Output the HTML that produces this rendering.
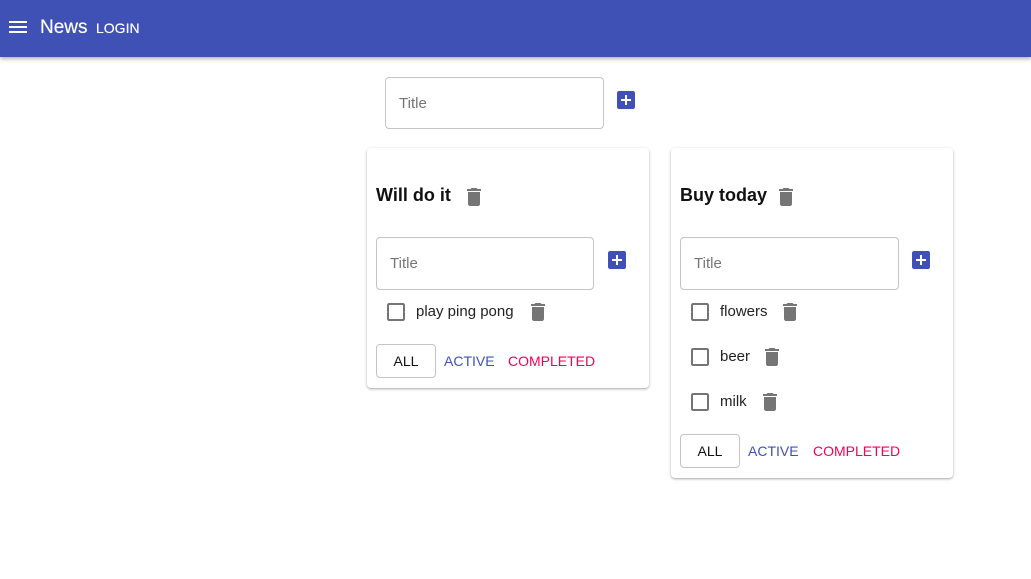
<!DOCTYPE html>
<html><head><meta charset="utf-8"><style>
body{margin:0;width:1031px;height:579px;background:#fff;position:relative;overflow:hidden;font-family:"Liberation Sans",sans-serif;}
.a{position:absolute;}
.bar{left:0;top:0;width:1031px;height:57px;background:#3f51b5;box-shadow:0 2px 4px rgba(0,0,0,.3);}
.inp{border:1px solid #c4c4c4;border-radius:4px;box-sizing:border-box;color:#757575;font-size:15px;padding-left:13px;display:flex;align-items:center;}
.card{background:#fff;border-radius:4px;box-shadow:0 1px 3px rgba(0,0,0,.25),0 1px 1px rgba(0,0,0,.12);}
.t{font-size:18px;font-weight:bold;color:#111;}
.it{font-size:15px;color:#222;}
.btn{font-size:14px;letter-spacing:0;}
.all{border:1px solid #c4c4c4;border-radius:4px;box-sizing:border-box;display:flex;align-items:center;justify-content:center;color:#111;}
</style></head><body>
<div class="a bar"></div>
<svg class="a" style="left:6px;top:15px" width="24" height="24" viewBox="0 0 24 24"><path fill="#fff" d="M3 18h18v-2H3v2zm0-5h18v-2H3v2zm0-7v2h18V6H3z"/></svg>
<div class="a" style="left:40px;top:17px;color:#fff;font-size:19px;font-weight:500;text-shadow:0 0 .4px #fff;">News</div>
<div class="a" style="left:96px;top:20px;color:#fff;font-size:14px;text-shadow:0 0 .4px #fff;">LOGIN</div>

<div class="a inp" style="left:385px;top:77px;width:219px;height:52px;">Title</div>
<svg class="a" style="left:614px;top:88px" width="24" height="24" viewBox="0 0 24 24"><path fill="#3f51b5" d="M19 3H5c-1.11 0-2 .9-2 2v14c0 1.1.89 2 2 2h14c1.1 0 2-.9 2-2V5c0-1.1-.9-2-2-2zm-2 10h-4v4h-2v-4H7v-2h4V7h2v4h4v2z"/></svg>

<div class="a card" style="left:367px;top:148px;width:282px;height:240px;"></div>
<div class="a t" style="left:376px;top:185px;">Will do it</div>
<svg class="a" style="left:462px;top:185px" width="24" height="24" viewBox="0 0 24 24"><path fill="#757575" d="M6 19c0 1.1.9 2 2 2h8c1.1 0 2-.9 2-2V7H6v12zM19 4h-3.5l-1-1h-5l-1 1H5v2h14V4z"/></svg>
<div class="a inp" style="left:376px;top:237px;width:218px;height:53px;">Title</div>
<svg class="a" style="left:605px;top:248px" width="24" height="24" viewBox="0 0 24 24"><path fill="#3f51b5" d="M19 3H5c-1.11 0-2 .9-2 2v14c0 1.1.89 2 2 2h14c1.1 0 2-.9 2-2V5c0-1.1-.9-2-2-2zm-2 10h-4v4h-2v-4H7v-2h4V7h2v4h4v2z"/></svg>
<svg class="a" style="left:384px;top:300px" width="24" height="24" viewBox="0 0 24 24"><path fill="#757575" d="M19 5v14H5V5h14m0-2H5c-1.1 0-2 .9-2 2v14c0 1.1.9 2 2 2h14c1.1 0 2-.9 2-2V5c0-1.1-.9-2-2-2z"/></svg>
<div class="a it" style="left:416px;top:303px;">play ping pong</div>
<svg class="a" style="left:526px;top:300px" width="24" height="24" viewBox="0 0 24 24"><path fill="#757575" d="M6 19c0 1.1.9 2 2 2h8c1.1 0 2-.9 2-2V7H6v12zM19 4h-3.5l-1-1h-5l-1 1H5v2h14V4z"/></svg>
<div class="a all btn" style="left:376px;top:344px;width:60px;height:34px;">ALL</div>
<div class="a btn" style="left:444px;top:353px;color:#3f51b5;">ACTIVE</div>
<div class="a btn" style="left:508px;top:353px;color:#f50057;">COMPLETED</div>

<div class="a card" style="left:671px;top:148px;width:282px;height:330px;"></div>
<div class="a t" style="left:680px;top:185px;">Buy today</div>
<svg class="a" style="left:774px;top:185px" width="24" height="24" viewBox="0 0 24 24"><path fill="#757575" d="M6 19c0 1.1.9 2 2 2h8c1.1 0 2-.9 2-2V7H6v12zM19 4h-3.5l-1-1h-5l-1 1H5v2h14V4z"/></svg>
<div class="a inp" style="left:680px;top:237px;width:219px;height:53px;">Title</div>
<svg class="a" style="left:909px;top:248px" width="24" height="24" viewBox="0 0 24 24"><path fill="#3f51b5" d="M19 3H5c-1.11 0-2 .9-2 2v14c0 1.1.89 2 2 2h14c1.1 0 2-.9 2-2V5c0-1.1-.9-2-2-2zm-2 10h-4v4h-2v-4H7v-2h4V7h2v4h4v2z"/></svg>

<svg class="a" style="left:688px;top:300px" width="24" height="24" viewBox="0 0 24 24"><path fill="#757575" d="M19 5v14H5V5h14m0-2H5c-1.1 0-2 .9-2 2v14c0 1.1.9 2 2 2h14c1.1 0 2-.9 2-2V5c0-1.1-.9-2-2-2z"/></svg>
<div class="a it" style="left:720px;top:303px;">flowers</div>
<svg class="a" style="left:778px;top:300px" width="24" height="24" viewBox="0 0 24 24"><path fill="#757575" d="M6 19c0 1.1.9 2 2 2h8c1.1 0 2-.9 2-2V7H6v12zM19 4h-3.5l-1-1h-5l-1 1H5v2h14V4z"/></svg>

<svg class="a" style="left:688px;top:345px" width="24" height="24" viewBox="0 0 24 24"><path fill="#757575" d="M19 5v14H5V5h14m0-2H5c-1.1 0-2 .9-2 2v14c0 1.1.9 2 2 2h14c1.1 0 2-.9 2-2V5c0-1.1-.9-2-2-2z"/></svg>
<div class="a it" style="left:720px;top:348px;">beer</div>
<svg class="a" style="left:760px;top:345px" width="24" height="24" viewBox="0 0 24 24"><path fill="#757575" d="M6 19c0 1.1.9 2 2 2h8c1.1 0 2-.9 2-2V7H6v12zM19 4h-3.5l-1-1h-5l-1 1H5v2h14V4z"/></svg>

<svg class="a" style="left:688px;top:390px" width="24" height="24" viewBox="0 0 24 24"><path fill="#757575" d="M19 5v14H5V5h14m0-2H5c-1.1 0-2 .9-2 2v14c0 1.1.9 2 2 2h14c1.1 0 2-.9 2-2V5c0-1.1-.9-2-2-2z"/></svg>
<div class="a it" style="left:720px;top:393px;">milk</div>
<svg class="a" style="left:758px;top:390px" width="24" height="24" viewBox="0 0 24 24"><path fill="#757575" d="M6 19c0 1.1.9 2 2 2h8c1.1 0 2-.9 2-2V7H6v12zM19 4h-3.5l-1-1h-5l-1 1H5v2h14V4z"/></svg>

<div class="a all btn" style="left:680px;top:434px;width:60px;height:34px;">ALL</div>
<div class="a btn" style="left:748px;top:443px;color:#3f51b5;">ACTIVE</div>
<div class="a btn" style="left:813px;top:443px;color:#f50057;">COMPLETED</div>
</body></html>
